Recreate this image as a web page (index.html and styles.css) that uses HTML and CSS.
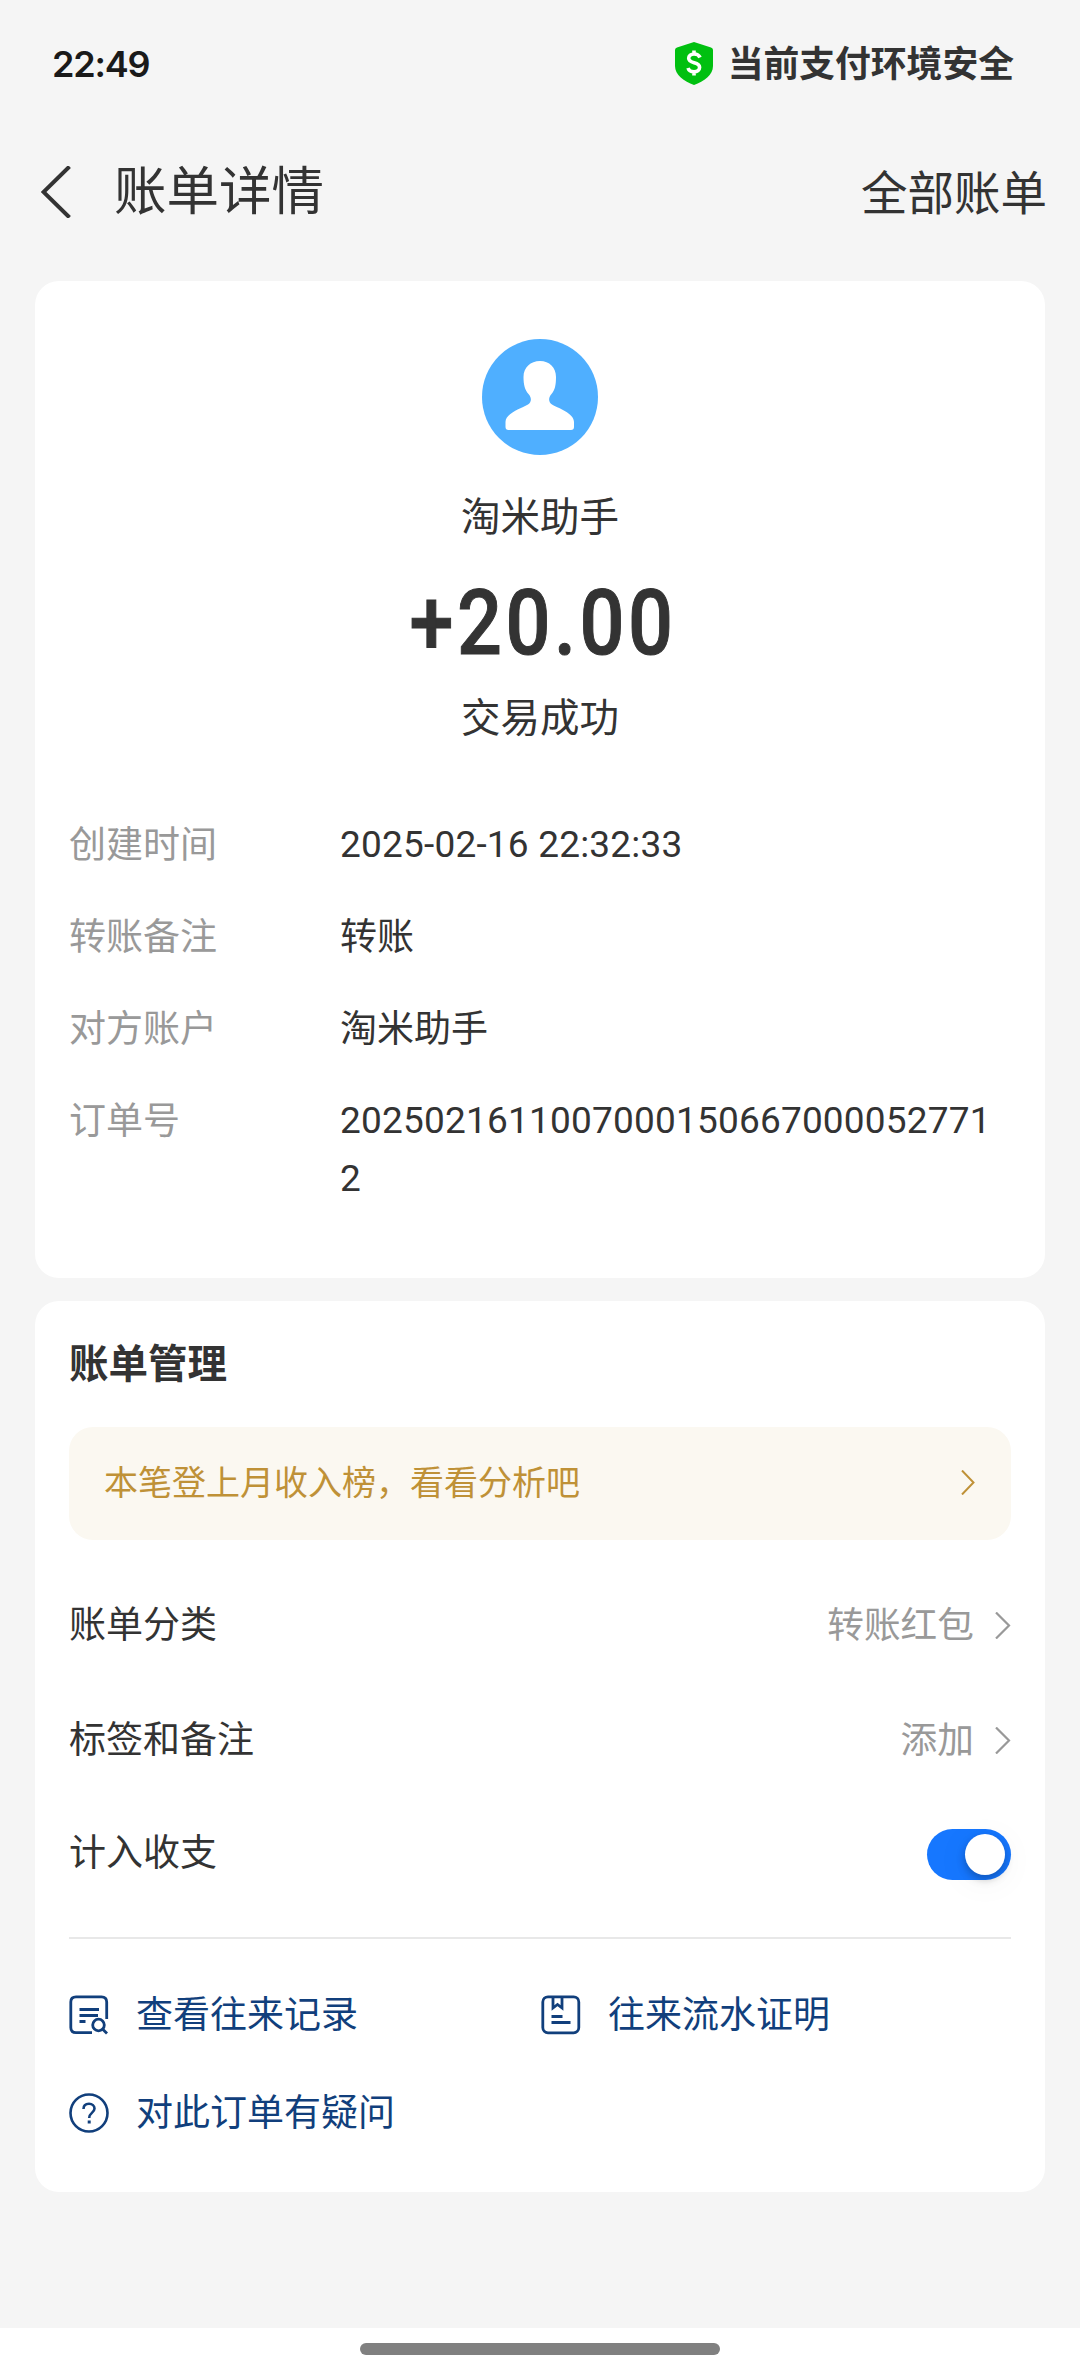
FILE: index.html
```html
<!DOCTYPE html>
<html lang="zh-CN">
<head>
    <meta charset="UTF-8">
    <meta name="viewport" content="width=device-width, initial-scale=1.0">
    <title>账单详情</title>
    <link rel="stylesheet" href="styles.css">
</head>
<body>
    <div class="status-bar">
        <span class="time">22:49</span>
        <div class="safe">
            <svg class="shield" viewBox="0 0 38 43">
                <path d="M19 0 L36 5.5 Q38 6.2 38 8 V24 C38 33 29 39.5 19 43 C9 39.5 0 33 0 24 V8 Q0 6.2 2 5.5 Z" fill="#00c010"/>
                <path d="M25 15.5 C24 12.8 21.6 12 19 12 C15.800 12 13.700 13.700 13.700 16.300 C13.700 22.300 24.600 19.200 24.600 25.300 C24.600 28 22.300 29.800 19 29.800 C16 29.800 13.800 28.600 13 26 M19 8.500 V12.500 M19 29.500 V33.500" fill="none" stroke="#fff" stroke-width="3.6"/>
            </svg>
            <span class="safe-text">当前支付环境安全</span>
        </div>
    </div>

    <div class="nav">
        <svg class="back" viewBox="0 0 30 52">
            <path d="M28.500 0.500 L2.500 26 L28.500 51.500" fill="none" stroke="#333" stroke-width="4"/>
        </svg>
        <h1>账单详情</h1>
        <a class="all">全部账单</a>
    </div>

    <div class="card summary">
        <svg class="avatar" viewBox="0 0 116 116">
            <circle cx="58" cy="58" r="58" fill="#4fafff"/>
            <path d="M58 22 C67.500 22 74 28.500 74 38 C74 46 73 51 69.500 55 C66.500 58.500 66 62.500 70 65.500 C76 69 92 74 92 83 V88 Q92 91 89 91 H26.500 Q23.500 91 23.500 88 V83 C23.500 74 40 69 46 65.500 C50 62.500 49.500 58.500 46.500 55 C43 51 41.500 46 41.500 38 C41.500 28.500 48.500 22 58 22 Z" fill="#fff"/>
        </svg>
        <div class="name">淘米助手</div>
        <div class="amount">+20.00</div>
        <div class="state">交易成功</div>

        <div class="details">
            <div class="detail">
                <span class="label">创建时间</span>
                <span class="value">2025-02-16 22:32:33</span>
            </div>
            <div class="detail">
                <span class="label">转账备注</span>
                <span class="value value-cn">转账</span>
            </div>
            <div class="detail">
                <span class="label">对方账户</span>
                <span class="value value-cn">淘米助手</span>
            </div>
            <div class="detail">
                <span class="label">订单号</span>
                <span class="value">20250216110070001506670000527712</span>
            </div>
        </div>
    </div>

    <div class="card manage">
        <h2>账单管理</h2>
        <div class="banner">
            <span>本笔登上月收入榜，看看分析吧</span>
            <svg class="arrow-gold" viewBox="0 0 14 25">
                <path d="M1 0.500 L12.500 12.500 L1 24.500" fill="none" stroke="#bf9137" stroke-width="2"/>
            </svg>
        </div>

        <div class="row">
            <span>账单分类</span>
            <span class="right">转账红包</span>
            <svg class="arrow" viewBox="0 0 16 27">
                <path d="M1 0.500 L14 13.500 L1 26.500" fill="none" stroke="#999" stroke-width="2.2"/>
            </svg>
        </div>
        <div class="row">
            <span>标签和备注</span>
            <span class="right">添加</span>
            <svg class="arrow" viewBox="0 0 16 27">
                <path d="M1 0.500 L14 13.500 L1 26.500" fill="none" stroke="#999" stroke-width="2.2"/>
            </svg>
        </div>
        <div class="row row-switch">
            <span>计入收支</span>
            <span class="switch"><span class="knob"></span></span>
        </div>

        <div class="divider"></div>

        <div class="links">
            <a class="link">
                <svg viewBox="0 0 40 40" fill="none" stroke="#113f7c" stroke-width="2.8">
                    <path d="M23 37.700 H7 Q1.800 37.700 1.800 32.500 V7 Q1.800 1.800 7 1.800 H32.500 Q37.700 1.800 37.700 7 V24"/>
                    <path d="M10.500 14.500 H30 M10.500 20.500 H29 M10.500 26.500 H16.500"/>
                    <circle cx="29.500" cy="30" r="5.800"/>
                    <path d="M33.500 34 L38 38.500"/>
                </svg>
                <span>查看往来记录</span>
            </a>
            <a class="link link-right">
                <svg viewBox="0 0 40 40" fill="none" stroke="#113f7c" stroke-width="2.8">
                    <rect x="1.800" y="1.800" width="36" height="36" rx="5.200"/>
                    <path d="M12 2 V13 L16.500 9.500 L21 13 V2"/>
                    <path d="M10.500 21.500 H21.500 M10.500 27.500 H29.500"/>
                </svg>
                <span>往来流水证明</span>
            </a>
            <a class="link">
                <svg viewBox="0 0 40 40" fill="none" stroke="#113f7c" stroke-width="2.6">
                    <circle cx="20" cy="20" r="18.500"/>
                    <path d="M14.500 16 C14.500 12.600 16.800 10.800 20 10.800 C23.200 10.800 25.500 12.800 25.500 15.600 C25.500 19.800 20.200 19.600 20.200 25"/>
                    <path d="M20.200 27.500 V30.500" stroke-width="3"/>
                </svg>
                <span>对此订单有疑问</span>
            </a>
        </div>
    </div>

    <div class="home">
        <div class="home-bar"></div>
    </div>
</body>
</html>
```
FILE: styles.css
```css
* {
    box-sizing: border-box;
}

body {
    margin: 0;
    width: 1080px;
    height: 2376px;
    display: flex;
    flex-direction: column;
    background-color: #f5f5f5;
    color: #333;
    font-family: Roboto, "Noto Sans CJK SC", sans-serif;
    font-size: 37px;
    line-height: 58px;
}

h1, h2 {
    margin: 0;
}

svg {
    display: block;
    flex: none;
}

/* top */
.status-bar {
    height: 127px;
    padding: 0 66px 0 52px;
    display: flex;
    align-items: center;
    justify-content: space-between;
}

.time {
    font-family: Inter, sans-serif;
    font-size: 36px;
    font-weight: 600;
    letter-spacing: -1.2px;
    color: #1a1a1a;
}

.safe {
    display: flex;
    align-items: center;
    gap: 15px;
}

.shield {
    width: 38px;
    height: 43px;
}

.safe-text {
    padding-top: 2px;
    font-size: 35.8px;
    font-weight: 700;
}

.nav {
    height: 154px;
    padding: 0 33px 24px 41px;
    display: flex;
    align-items: center;
}

.back {
    width: 30px;
    height: 52px;
    margin-right: 43px;
}

h1 {
    font-size: 52.500px;
    font-weight: 400;
}

.all {
    margin-left: auto;
    padding-top: 4px;
    font-size: 46.500px;
}

/* cards */
.card {
    margin: 0 35px;
    border-radius: 24px;
    background: #fff;
}

.summary {
    height: 997px;
    padding: 58px 34px 0;
    margin-bottom: 23px;
    display: flex;
    flex-direction: column;
    align-items: center;
}

.avatar {
    width: 116px;
    height: 116px;
}

.name, .state {
    font-size: 39.500px;
    line-height: 56px;
}

.name {
    margin-top: 35px;
}

.amount {
    margin-top: 29px;
    padding-left: 6px;
    font-size: 91px;
    font-weight: 500;
    line-height: 96px;
    letter-spacing: 4px;
    -webkit-text-stroke: 1px #333;
    /* narrow digits */
    transform: scaleX(0.87);
}

.state {
    margin-top: 20px;
}

.details {
    width: 100%;
    margin-top: 69px;
    display: flex;
    flex-direction: column;
    gap: 34px;
}

.detail {
    height: 58px;
    display: flex;
}

.label {
    width: 271px;
    flex: none;
    padding-top: 1px;
    color: #999;
}

.value {
    width: 660px;
    word-break: break-all;
    letter-spacing: 0.2px;
}

.value-cn {
    padding-top: 1px;
    letter-spacing: 0;
}

.manage {
    height: 891px;
    padding: 36px 34px 0;
}

h2 {
    font-size: 39.500px;
    font-weight: 700;
    line-height: 56px;
}

.banner {
    height: 113px;
    margin: 34px 0 28px;
    padding: 0 36px 2px 35px;
    display: flex;
    align-items: center;
    justify-content: space-between;
    border-radius: 24px;
    background: #fbf8f1;
    color: #bf9137;
    font-size: 34px;
}

.arrow-gold {
    width: 14px;
    height: 25px;
}

.row {
    height: 115px;
    display: flex;
    align-items: center;
}

.right {
    margin-left: auto;
    color: #999;
    font-size: 36.700px;
}

.arrow {
    width: 16px;
    height: 27px;
    margin-left: 21px;
}

.row-switch {
    height: 112px;
    justify-content: space-between;
}

.switch {
    width: 84px;
    height: 51px;
    padding: 5px 6px;
    display: flex;
    justify-content: flex-end;
    border-radius: 26px;
    background: #1677ff;
}

.knob {
    width: 40px;
    height: 41px;
    border-radius: 50%;
    background: #fff;
    box-shadow: 0 4px 8px rgba(0,0,0,0.25), 0 6px 36px rgba(0,0,0,0.06);
}

.divider {
    height: 2px;
    margin: 27px 0;
    background: #e8e8e8;
}

.links {
    display: grid;
    grid-template-columns: 1fr 1fr;
    grid-auto-rows: 98px;
    color: #113f7c;
}

.link {
    display: flex;
    align-items: center;
    gap: 27px;
}

.link-right {
    padding-left: 1px;
}

.link span {
    padding-top: 1px;
}

.link svg {
    width: 40px;
    height: 40px;
}

/* gesture area */
.home {
    height: 48px;
    margin-top: auto;
    padding-top: 15px;
    background: #fff;
}

.home-bar {
    width: 360px;
    height: 12px;
    margin: 0 auto;
    border-radius: 6px;
    background: #808080;
}
```
